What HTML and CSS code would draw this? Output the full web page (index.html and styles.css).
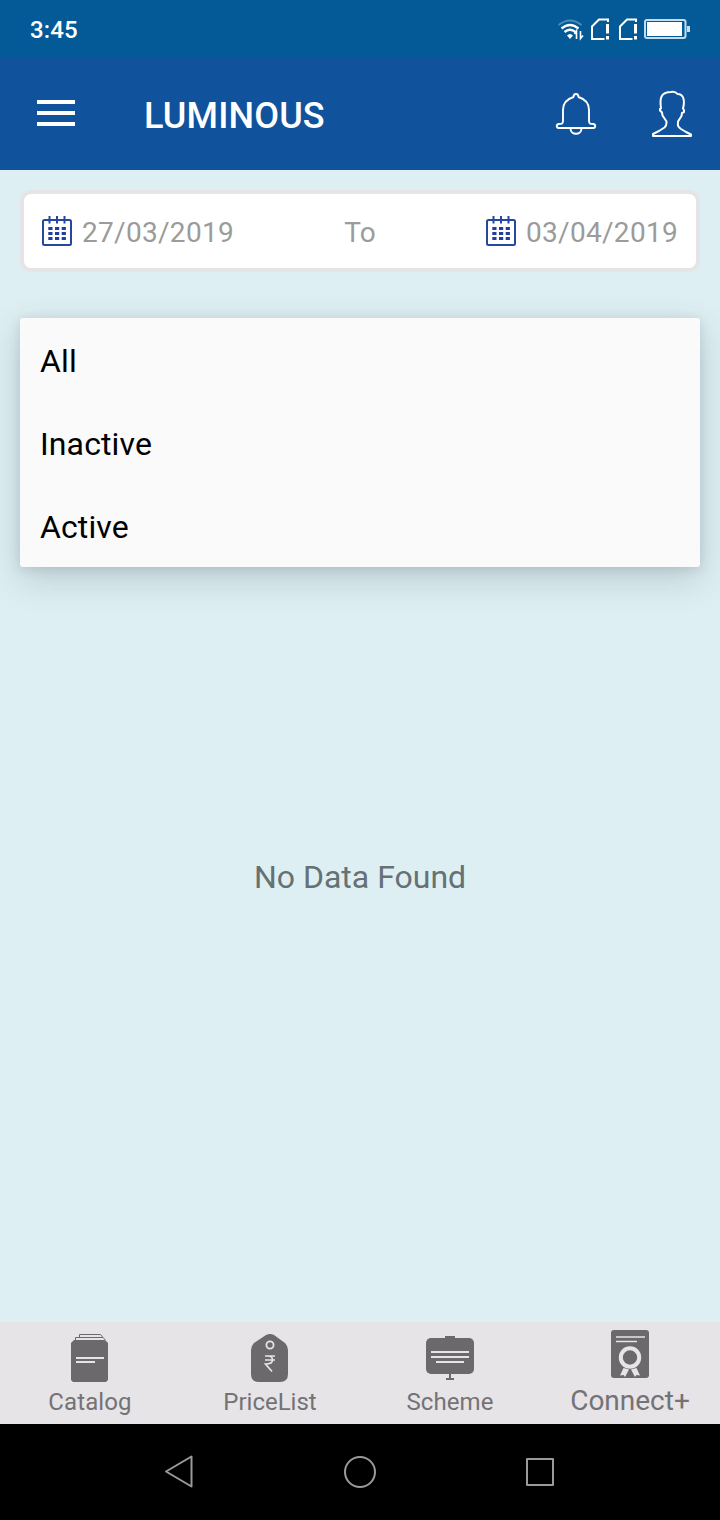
FILE: index.html
```
<!DOCTYPE html>
<html lang="en">
<head>
<meta charset="utf-8">
<title>Luminous</title>
<link rel="stylesheet" href="styles.css">
</head>
<body>
<div class="screen">
  <div class="status">
    <span class="clock">3:45</span>
    <svg class="status-icons" width="134" height="24" viewBox="557 17 134 24" fill="none" stroke="#fff" stroke-width="2">
      <path d="M558.5 25Q570 16 581.500 25" stroke="#4d8bb8" stroke-width="1.800"/>
      <path d="M561.500 28.500Q570 21.500 578.500 28.500M564.500 32Q570 27.500 575.500 32" stroke-width="2.300"/>
      <path d="M567 35.500Q570 32.500 573 35.500L570 39Z" fill="#fff" stroke="none"/>
      <path d="M576.500 39V31L574.500 34M580.500 31V38.500L583 35.500" stroke-width="1.600"/>
      <path d="M608 22V19.500H599L592 26.500V39H604.500"/>
      <path d="M607.500 24V33.500M607.500 36V39.500" stroke-width="3"/>
      <path d="M636 22V19.500H627L620 26.500V39H632.500"/>
      <path d="M635.500 24V33.500M635.500 36V39.500" stroke-width="3"/>
      <rect x="645" y="20" width="40.500" height="18" rx="2" stroke="#c5dcea"/>
      <rect x="647" y="22" width="35" height="14" fill="#fff" stroke="none"/>
      <path d="M688.500 26V32" stroke="#c5dcea" stroke-width="3"/>
    </svg>
  </div>
  <header class="appbar">
    <svg class="burger" width="38" height="28" viewBox="0 0 38 28" fill="#fff"><path d="M0 1H38V5H0ZM0 12H38V16H0ZM0 23H38V27H0Z"/></svg>
    <h1 class="title">LUMINOUS</h1>
    <svg class="bell" width="48" height="48" viewBox="552 90 48 48" fill="none" stroke="#fff" stroke-width="1.900" stroke-linejoin="round">
      <path d="M573.500 97C573.500 93 578.500 93 578.500 97C585 99 589 103.500 589 110V121C589 124 590.500 124 593.500 124C596 124.500 595.500 128 593.500 128H558.500C556.500 128 556 124.500 558.500 124C561.500 124 563 124 563 121V110C563 103.500 567 99 573.500 97Z"/>
      <path d="M570.500 128.500C570.500 135.500 581.500 135.500 581.500 128.500"/>
    </svg>
    <svg class="person" width="48" height="48" viewBox="648 90 48 48" fill="none" stroke="#fff" stroke-width="2" stroke-linejoin="round">
      <path d="M653 136V134L659 131L664.500 127.500C667 125 666.500 124 666.500 121.500L662.500 115.500L662 112.500L660 110.500V109L661 108.500C659.500 98 661 92 671 92C674 91.500 676 92 677.500 94C684 94 685 101 683 108.500L684 110V112L682 113L681.500 116L678 121.500C677.500 126 678 127 681 129L686 132L691 134.500V136Z"/>
    </svg>
  </header>
  <main class="content">
    <div class="dates">
      <svg class="cal" width="30" height="30" viewBox="0 0 30 30"><rect x="1" y="4" width="28" height="25" rx="1.500" fill="none" stroke="#26479f" stroke-width="2"/><path d="M7.500 0V7.500M15 0V7.500M22.500 0V7.500" stroke="#26479f" stroke-width="2"/><path d="M6.300 12.500H24M6.300 17.500H24M6.300 22.500H24" stroke="#203f9e" stroke-width="3" stroke-dasharray="4.200 2.500"/></svg>
      <span class="date">27/03/2019</span>
      <span class="to">To</span>
      <svg class="cal" width="30" height="30" viewBox="0 0 30 30"><rect x="1" y="4" width="28" height="25" rx="1.500" fill="none" stroke="#26479f" stroke-width="2"/><path d="M7.500 0V7.500M15 0V7.500M22.500 0V7.500" stroke="#26479f" stroke-width="2"/><path d="M6.300 12.500H24M6.300 17.500H24M6.300 22.500H24" stroke="#203f9e" stroke-width="3" stroke-dasharray="4.200 2.500"/></svg>
      <span class="date">03/04/2019</span>
    </div>
    <ul class="menu">
      <li class="option">All</li>
      <li class="option">Inactive</li>
      <li class="option">Active</li>
    </ul>
    <p class="empty">No Data Found</p>
  </main>
  <nav class="tabs">
    <div class="tab">
      <svg width="48" height="48" viewBox="0 0 48 48"><path d="M8 6H39L42 9V46L40 48H7L5 46V9Z" fill="#6b696c"/><path d="M9.500 6V3.500H37L39.500 6M13.500 3V.5H34.500L37 3.500" fill="none" stroke="#6b696c"/><path d="M10 5H37" stroke="#e6e4e6"/><path d="M10 24H38M10 28H29" stroke="#e6e4e6" stroke-width="1.800"/></svg>
      <span class="label">Catalog</span>
    </div>
    <div class="tab">
      <svg width="48" height="48" viewBox="0 0 48 48"><path d="M20 1Q24-1 28 1L39 9Q42 12 42 16V40Q42 48 34 48H13Q5 48 5 40V16Q5 12 8 9Z" fill="#6b696c"/><circle cx="24" cy="11" r="3.600" fill="none" stroke="#e6e4e6" stroke-width="1.800"/><path d="M19 22H29M19 26H29M19 22H22Q26.500 22 26.500 26Q26.500 30 19.500 30L26 37.500" fill="none" stroke="#e6e4e6" stroke-width="1.700"/></svg>
      <span class="label tight">PriceList</span>
    </div>
    <div class="tab">
      <svg width="48" height="48" viewBox="0 0 48 48"><rect y="4" width="48" height="36" rx="5" fill="#6b696c"/><path d="M19 2H29V5H19ZM23 40H25V44H28V46H20V44H23Z" fill="#6b696c"/><path d="M5 18H43M5 23H43M10 28H38" stroke="#e6e4e6" stroke-width="2"/></svg>
      <span class="label">Scheme</span>
    </div>
    <div class="tab active">
      <svg width="48" height="48" viewBox="0 0 48 48"><rect x="5" width="38" height="48" rx="3" fill="#6b696c"/><path d="M10 7H39M10 11.500H31" stroke="#e6e4e6" stroke-width="1.400"/><circle cx="24" cy="27.500" r="9.200" fill="none" stroke="#e6e4e6" stroke-width="4"/><path d="M17.500 38L23 39.500L19 47L17.500 45L14 45.500ZM30.500 38L25 39.500L29 47L30.500 45L34 45.500Z" fill="#e6e4e6"/></svg>
      <span class="label tight">Connect+</span>
    </div>
  </nav>
  <div class="sysnav">
    <svg width="32" height="34" viewBox="0 0 32 34"><path d="M2 16.500L27.500 1.500V31.500Z"/></svg>
    <svg width="34" height="34" viewBox="0 0 34 34"><circle cx="17" cy="17" r="15"/></svg>
    <svg width="30" height="30" viewBox="0 0 30 30"><rect x="2" y="2" width="26" height="26"/></svg>
  </div>
</div>
</body>
</html>
```
FILE: styles.css
```
* { box-sizing: border-box; margin: 0; padding: 0; }
body { font-family: Roboto, "Liberation Sans", sans-serif; }
svg { display: block; flex: none; }
.screen { width: 720px; height: 1520px; display: flex; flex-direction: column; background: #deeff3; overflow: hidden; }
.status { height: 57px; background: #045997; display: flex; align-items: flex-start; justify-content: space-between; padding: 16px 29px 0 30px; color: #fff; }
.clock { font-size: 24px; line-height: 28px; font-weight: 500; letter-spacing: .1px; }
.status-icons { margin-top: 1px; }
.appbar { height: 113px; background: #10529c; display: flex; align-items: center; padding: 0 24px 0 37px; color: #fff; }
.burger { margin-bottom: 2px; }
.title { font-size: 36px; line-height: 42px; font-weight: 500; letter-spacing: .15px; margin: 5px auto 0 69px; }
.bell { margin-right: 48px; }
.content { flex: 1; padding: 20px; }
.dates { height: 82px; border: 4px solid #e6e4e6; border-radius: 11px; background: #fff; display: flex; align-items: center; padding: 0 18px; color: #9b9b9b; font-size: 28px; line-height: 34px; }
.date { width: 152px; margin: 4px 0 0 10px; white-space: nowrap; letter-spacing: .3px; }
.to { flex: 1; margin-top: 4px; text-align: center; }
.menu { list-style: none; height: 249px; margin-top: 46px; background: #fafafa; border-radius: 3px; box-shadow: 0 12px 36px rgba(45, 65, 75, .2), 0 2px 12px rgba(45, 65, 75, .14); }
.option { height: 83px; padding: 2px 20px 0; line-height: 83px; font-size: 32px; letter-spacing: .12px; color: #000; }
.empty { margin-top: 291px; text-align: center; font-size: 32px; line-height: 38px; color: #667173; }
.tabs { height: 102px; background: #e6e4e6; display: grid; grid-template-columns: repeat(4, 1fr); }
.tab { display: flex; flex-direction: column; align-items: center; padding-top: 12px; color: #747275; font-size: 24px; line-height: 28px; }
.label { margin-top: 6px; letter-spacing: .1px; }
.tight { letter-spacing: 0; }
.active { padding-top: 8px; font-size: 28px; }
.active .label { margin-top: 9px; }
.sysnav { height: 96px; background: #000; display: grid; grid-template-columns: repeat(3, 180px); justify-content: center; place-items: center; fill: none; stroke: #9a9a9a; stroke-width: 2; stroke-linejoin: round; }
```
